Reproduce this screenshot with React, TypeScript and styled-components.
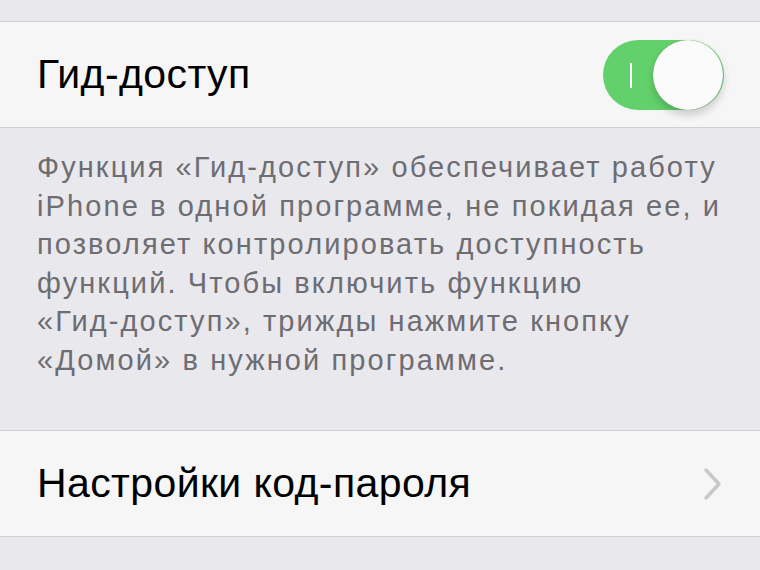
import styled, { createGlobalStyle } from "styled-components";

const GlobalStyle = createGlobalStyle`
  html, body {
    margin: 0;
    padding: 0;
    background: #e9e8ed;
  }
  body {
    font-family: "Liberation Sans", Arial, sans-serif;
    -webkit-font-smoothing: antialiased;
  }
`;

const Screen = styled.div`
  width: 760px;
  height: 570px;
  overflow: hidden;
  background: #e9e8ed;
  padding-top: 21px;
  box-sizing: border-box;
`;

const Cell = styled.div`
  display: flex;
  align-items: center;
  justify-content: space-between;
  height: 105px;
  padding: 0 36px 0 37px;
  background: #f6f6f7;
  border-top: 1.5px solid #cfced3;
  border-bottom: 1.5px solid #cfced3;
`;

const CellTitle = styled.span`
  font-size: 41px;
  color: #000;
  letter-spacing: 0.4px;
`;

const Footer = styled.p`
  margin: 0;
  padding: 20px 20px 0 37px;
  height: 302px;
  box-sizing: border-box;
  font-size: 29px;
  line-height: 38.6px;
  color: #6d6d72;
  letter-spacing: 2.1px;
  white-space: nowrap;
`;

const Track = styled.div<{ $on: boolean }>`
  position: relative;
  width: 121px;
  height: 70px;
  border-radius: 35px;
  background: ${(p) => (p.$on ? "#63d16b" : "#e5e5ea")};
`;

const OnMark = styled.div`
  position: absolute;
  left: 27px;
  top: 23px;
  width: 2px;
  height: 25px;
  background: #fff;
`;

const Knob = styled.div`
  position: absolute;
  right: 1px;
  top: 0;
  width: 70px;
  height: 70px;
  border-radius: 50%;
  background: #fbfbfb;
  box-shadow: 0 5px 8px rgba(0, 0, 0, 0.18), 0 0 1px rgba(0, 0, 0, 0.25);
`;

const Chevron = () => (
  <svg width="22" height="34" viewBox="0 0 22 34">
    <path
      d="M4 3 L17 17 L4 31"
      fill="none"
      stroke="#c7c7cc"
      strokeWidth="3.5"
      strokeLinecap="round"
      strokeLinejoin="round"
    />
  </svg>
);

const footerLines = [
  "Функция «Гид-доступ» обеспечивает работу",
  "iPhone в одной программе, не покидая ее, и",
  "позволяет контролировать доступность",
  "функций. Чтобы включить функцию",
  "«Гид-доступ», трижды нажмите кнопку",
  "«Домой» в нужной программе.",
];

export default function App() {
  return (
    <Screen>
      <GlobalStyle />
      <Cell>
        <CellTitle>Гид-доступ</CellTitle>
        <Track $on>
          <OnMark />
          <Knob />
        </Track>
      </Cell>
      <Footer>
        {footerLines.map((line, i) => (
          <span key={i}>
            {line}
            {i < footerLines.length - 1 && <br />}
          </span>
        ))}
      </Footer>
      <Cell>
        <CellTitle>Настройки код-пароля</CellTitle>
        <Chevron />
      </Cell>
    </Screen>
  );
}
